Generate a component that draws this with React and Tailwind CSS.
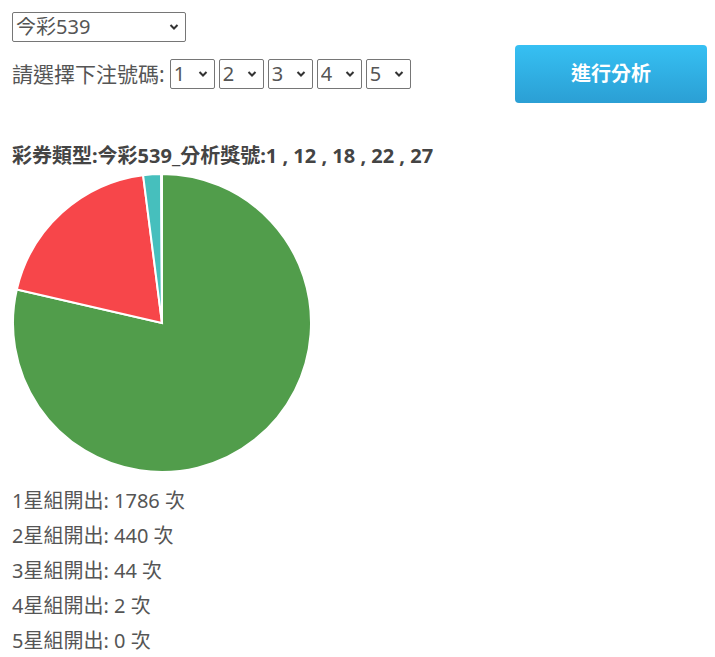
import { useState } from 'react';

const counts = [
  { label: '1星組開出', value: 1786, color: '#519d4b' },
  { label: '2星組開出', value: 440, color: '#f7464a' },
  { label: '3星組開出', value: 44, color: '#46bfbd' },
  { label: '4星組開出', value: 2, color: '#fdb45c' },
  { label: '5星組開出', value: 0, color: '#949fb1' },
];

const Chevron = () => (
  <svg width="10" height="7" viewBox="0 0 10 7" className="pointer-events-none absolute right-[7px] top-1/2 -translate-y-1/2">
    <path d="M1.5 1.5 L5 5 L8.5 1.5" fill="none" stroke="#333" strokeWidth="2" />
  </svg>
);

const Select = ({ value, options, onChange, className }) => (
  <div className={`relative ${className}`}>
    <select
      value={value}
      onChange={(e) => onChange(e.target.value)}
      className="w-full h-full appearance-none border border-[#767676] rounded-[2px] bg-white pl-[3px] text-[20px] leading-none text-[#555] outline-none"
    >
      {options.map((o) => (
        <option key={o} value={o}>{o}</option>
      ))}
    </select>
    <Chevron />
  </div>
);

// pie drawn clockwise from 12 o'clock
const Pie = ({ data, r = 149 }) => {
  const total = data.reduce((s, d) => s + d.value, 0);
  const cx = r + 1;
  const cy = r + 1;
  let angle = -Math.PI / 2;
  const slices = data
    .filter((d) => d.value > 0)
    .map((d) => {
      const sweep = (d.value / total) * Math.PI * 2;
      const a0 = angle;
      const a1 = angle + sweep;
      angle = a1;
      const x0 = cx + r * Math.cos(a0);
      const y0 = cy + r * Math.sin(a0);
      const x1 = cx + r * Math.cos(a1);
      const y1 = cy + r * Math.sin(a1);
      const large = sweep > Math.PI ? 1 : 0;
      return (
        <path
          key={d.label}
          d={`M${cx} ${cy} L${x0} ${y0} A${r} ${r} 0 ${large} 1 ${x1} ${y1} Z`}
          fill={d.color}
          stroke="#fff"
          strokeWidth="2"
        />
      );
    });
  return (
    <svg width={r * 2 + 2} height={r * 2 + 2} className="block">
      {slices}
    </svg>
  );
};

export default function App() {
  const [game, setGame] = useState('今彩539');
  const [picks, setPicks] = useState(['1', '2', '3', '4', '5']);
  const nums = Array.from({ length: 39 }, (_, i) => String(i + 1));

  return (
    <div className="font-['Noto_Sans','Noto_Sans_CJK_TC',sans-serif] text-[#555] pl-3 pr-2 pt-3">
      <div className="flex justify-between">
        <div className="flex flex-col gap-[17px]">
          <Select value={game} options={['今彩539', '大樂透', '威力彩']} onChange={setGame} className="w-[174px] h-[30px]" />
          <div className="flex items-center">
            <span className="text-[21px] leading-none mr-[5px]">請選擇下注號碼:</span>
            <div className="flex gap-[4px]">
              {picks.map((p, i) => (
                <Select
                  key={i}
                  value={p}
                  options={nums}
                  onChange={(v) => setPicks(picks.map((x, j) => (j === i ? v : x)))}
                  className="w-[45px] h-[30px]"
                />
              ))}
            </div>
          </div>
        </div>
        <button className="mt-[33px] w-[192px] h-[58px] rounded-[4px] bg-gradient-to-b from-[#36c0f3] to-[#2b9fd4] text-white text-[20px] font-bold">
          進行分析
        </button>
      </div>

      <h2 className="mt-[40px] text-[20px] font-bold text-[#444] leading-[26px]">
        彩券類型:今彩539_分析獎號:1 , 12 , 18 , 22 , 27
      </h2>

      <div className="mt-[4px]">
        <Pie data={counts} />
      </div>

      <div className="mt-[10px] flex flex-col">
        {counts.map((c) => (
          <p key={c.label} className="text-[20px] leading-[35px]">
            {c.label}: {c.value} 次
          </p>
        ))}
      </div>
    </div>
  );
}
